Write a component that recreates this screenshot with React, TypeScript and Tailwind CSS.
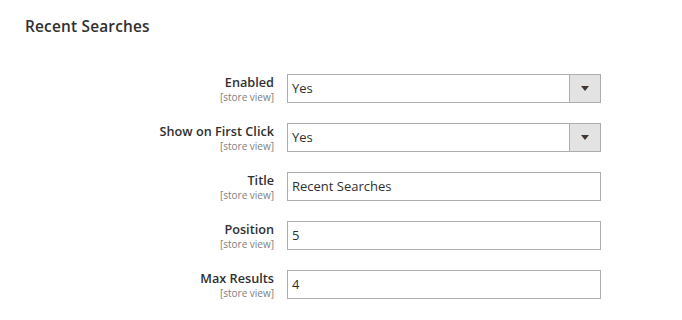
const rows = [
  { label: "Enabled", value: "Yes", select: true },
  { label: "Show on First Click", value: "Yes", select: true },
  { label: "Title", value: "Recent Searches", select: false },
  { label: "Position", value: "5", select: false },
  { label: "Max Results", value: "4", select: false },
]

const App = () => {
  return (
    <div className="w-[682px] h-[320px] bg-white text-[#303030]" style={{ fontFamily: '"Open Sans", sans-serif' }}>
      <div className="pl-[25px] pt-[17px]">
        <h2 className="text-[15.4px] font-semibold leading-[20px] text-[#303030] tracking-[0.2px]">Recent Searches</h2>
      </div>
      <div className="mt-[37px] flex flex-col gap-[20px]">
        {rows.map((row) => (
          <div key={row.label} className="flex items-start h-[29px]">
            <div className="w-[274px] flex flex-col items-end">
              <span className="text-[12.7px] font-semibold leading-[16px] text-[#303030]">{row.label}</span>
              <span className="mt-[1px] text-[10px] leading-[12px] text-[#808080]">[store view]</span>
            </div>
            <div className="ml-[13px] w-[314px] h-[29px] border border-[#adadad] flex items-center bg-white">
              <span className="pl-[4px] text-[13px] flex-1">{row.value}</span>
              {row.select && (
                <div className="w-[31px] h-full bg-[#e3e3e3] border-l border-[#adadad] flex items-center justify-center">
                  <svg width="8" height="5" viewBox="0 0 8 5">
                    <path d="M0 0 L8 0 L4 5 Z" fill="#41362f" />
                  </svg>
                </div>
              )}
            </div>
          </div>
        ))}
      </div>
    </div>
  )
}

export default App
